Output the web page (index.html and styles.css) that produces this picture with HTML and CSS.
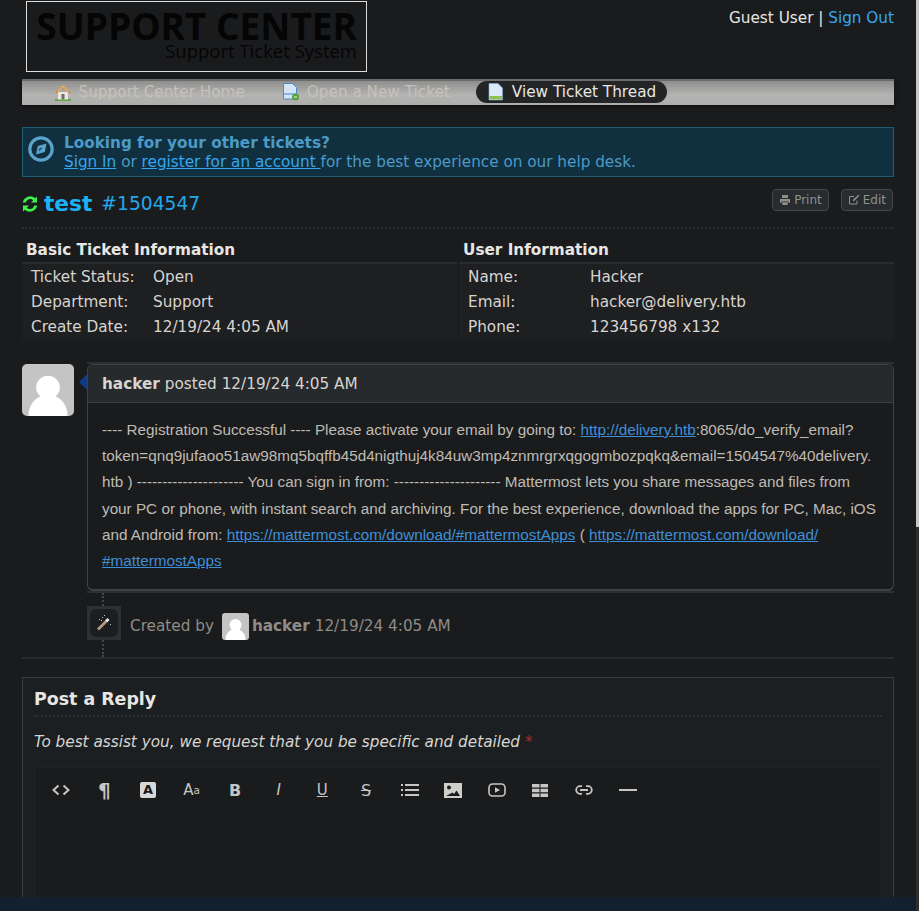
FILE: index.html
```html
<!DOCTYPE html>
<html lang="en">
<head>
    <meta charset="UTF-8">
    <meta name="viewport" content="width=device-width, initial-scale=1.0">
    <title>Support Center</title>
    <link rel="stylesheet" href="styles.css">
</head>
<body>
    <div class="window">
        <div class="page">
            <div class="container">
                <div class="header">
                    <div class="logo">
                        <div class="logo-title">SUPPORT CENTER</div>
                        <div class="logo-sub">Support Ticket System</div>
                    </div>
                    <p class="user-links">Guest User | <a href="#">Sign Out</a></p>
                </div>

                <ul class="nav">
                    <li>
                        <svg class="nav-icon" viewBox="0 0 18 18"><path d="M1 16h16v2H1z" fill="#5fa83c"/><path d="M4 9h10v7.500H4z" fill="#ece6da"/><path d="M7.500 11h3v5.500h-3z" fill="#6f6f6f"/><path d="M9 2 1 9.500l1.500 1L9 5l6.500 5.500 1.500-1z" fill="#c98a4b"/><path d="M9 2 3 8l1 1 5-4.500L14 9l1-1z" fill="#e2ad72"/></svg>
                        <a href="#">Support Center Home</a>
                    </li>
                    <li>
                        <svg class="nav-icon" viewBox="0 0 18 18"><path d="M1.500.500h9l4 4V16h-13z" fill="#d5e5f8" stroke="#4d88cf"/><path d="M2 10h12v2H2z" fill="#8db6e6"/><circle cx="13.500" cy="14" r="3.500" fill="#5aa43a"/><path d="M12 13.500h3v1h-3z" fill="#e8f5df"/></svg>
                        <a href="#">Open a New Ticket</a>
                    </li>
                    <li class="active">
                        <svg class="nav-icon" viewBox="0 0 18 18"><path d="M2 .500h9l4.500 4.500v12H2z" fill="#dbe9f9" stroke="#7daee0" stroke-width=".6"/><path d="M2.500 13h12.500v3.500H2.500z" fill="#8cc152"/></svg>
                        <a href="#">View Ticket Thread</a>
                    </li>
                </ul>

                <div class="notice">
                    <svg class="notice-icon" viewBox="0 0 26 26"><circle cx="13" cy="13" r="11.200" fill="none" stroke="#5ba3cb" stroke-width="3.200"/><path d="M18.500 7.500 16.800 16 8 18.500 9.700 10z" fill="#5ba3cb"/><path d="M14.500 11.500 11.500 12.500 10.900 15.600z" fill="#10303f"/></svg>
                    <div>
                        <strong>Looking for your other tickets?</strong><br>
                        <a href="#">Sign In</a> or <a href="#">register for an account </a>for the best experience on our help desk.
                    </div>
                </div>

                <div class="ticket-head">
                    <h1>
                        <svg class="refresh" viewBox="0 0 16 16"><path d="M15 .500v6H9l2.200-2.200A4.600 4.600 0 0 0 3.700 6.500H.800A7.500 7.500 0 0 1 13.200 2.300z" fill="#3cf04c"/><path d="M1 15.500v-6h6L4.800 11.700a4.600 4.600 0 0 0 7.500-2.200h2.900A7.500 7.500 0 0 1 2.800 13.700z" fill="#3cf04c"/></svg>
                        <a href="#" class="subject">test</a>
                        <span class="number">#1504547</span>
                    </h1>
                    <div class="actions">
                        <a href="#" class="btn">
                            <svg viewBox="0 0 12 12"><path d="M3 1h6v3H3zM1 5h10v4H9.500V7.500h-7V9H1zM3.300 8.200h5.400V11H3.300z" fill="currentColor"/></svg>
                            Print
                        </a>
                        <a href="#" class="btn">
                            <svg viewBox="0 0 12 12"><path d="M9 6.500V10H1.500V2.500H6" fill="none" stroke="currentColor"/><path d="M10.300.800l1 1L6.200 7H5V5.800z" fill="currentColor"/></svg>
                            Edit
                        </a>
                    </div>
                </div>

                <div class="info">
                    <div class="info-col">
                        <h3>Basic Ticket Information</h3>
                        <table>
                            <tr><th>Ticket Status:</th><td>Open</td></tr>
                            <tr><th>Department:</th><td>Support</td></tr>
                            <tr><th>Create Date:</th><td>12/19/24 4:05 AM</td></tr>
                        </table>
                    </div>
                    <div class="info-col">
                        <h3>User Information</h3>
                        <table>
                            <tr><th>Name:</th><td>Hacker</td></tr>
                            <tr><th>Email:</th><td>hacker@delivery.htb</td></tr>
                            <tr><th>Phone:</th><td>123456798 x132</td></tr>
                        </table>
                    </div>
                </div>

                <div class="thread-entry">
                    <svg class="avatar" viewBox="0 0 52 52"><rect width="52" height="52" fill="#c4c4c4"/><circle cx="26" cy="23.500" r="11.800" fill="#fff"/><path d="M6.500 52C6.500 39 15 31 26 31s19.500 8 19.500 21z" fill="#fff"/></svg>
                    <div class="card">
                        <div class="card-inner">
                            <div class="card-head"><b>hacker</b> posted 12/19/24 4:05 AM</div>
                            <div class="card-body">
                                ---- Registration Successful ---- Please activate your email by going to: <a href="#">http://delivery.htb</a>:8065/do_verify_email?<br>
                                token=qnq9jufaoo51aw98mq5bqffb45d4nigthuj4k84uw3mp4znmrgrxqgogmbozpqkq&amp;email=1504547%40delivery.<br>
                                htb ) --------------------- You can sign in from: --------------------- Mattermost lets you share messages and files from<br>
                                your PC or phone, with instant search and archiving. For the best experience, download the apps for PC, Mac, iOS<br>
                                and Android from: <a href="#">https://mattermost.com/download/#mattermostApps</a> ( <a href="#">https://mattermost.com/download/<br>#mattermostApps</a>
                            </div>
                        </div>
                    </div>
                </div>

                <div class="event">
                    <div class="event-icon">
                        <span>
                            <svg viewBox="0 0 18 18"><path d="M2 14.500 11.500 5l2 2L4 16.500z" fill="#b09a85"/><path d="M10.200 6.300 12.500 4l2 2-2.300 2.300z" fill="#e8e8e8"/><path d="M7 3h1v1H7zM4 5h1v1H4zM9 1h1v1H9zM6 6h1v1H6zM15 10h1v1h-1z" fill="#c8c8c8"/></svg>
                        </span>
                    </div>
                    <div class="event-text">
                        <span>Created by</span>
                        <svg class="mini-avatar" viewBox="0 0 27 27"><rect width="27" height="27" fill="#c4c4c4"/><circle cx="13.500" cy="12" r="6" fill="#fff"/><path d="M3.500 27c0-7 4.500-11 10-11s10 4 10 11z" fill="#fff"/></svg>
                        <b>hacker</b>
                        <span class="event-date">12/19/24 4:05 AM</span>
                    </div>
                </div>
                <div class="divider"></div>

                <div class="reply">
                    <h2>Post a Reply</h2>
                    <p class="hint">To best assist you, we request that you be specific and detailed <span class="req">*</span></p>
                    <div class="editor">
                        <div class="toolbar">
                            <span class="tool"><svg viewBox="0 0 18 12"><path d="M6.500 1.500 1.500 6l5 4.500M11.500 1.500l5 4.500-5 4.500" fill="none" stroke="currentColor" stroke-width="2"/></svg></span>
                            <span class="tool para">¶</span>
                            <span class="tool"><span class="boxed">A</span></span>
                            <span class="tool">A<small>a</small></span>
                            <span class="tool"><b>B</b></span>
                            <span class="tool"><i>I</i></span>
                            <span class="tool"><u>U</u></span>
                            <span class="tool strike"><s>S</s></span>
                            <span class="tool"><svg viewBox="0 0 18 14"><path d="M0 1h2v2H0zM4 1h14v2H4zM0 6h2v2H0zM4 6h14v2H4zM0 11h2v2H0zM4 11h14v2H4z" fill="currentColor"/></svg></span>
                            <span class="tool"><svg viewBox="0 0 18 15"><path fill-rule="evenodd" d="M0 0h18v15H0zM5 2.500a2 2 0 1 0 0 4 2 2 0 0 0 0-4zM2 13h14l-3.500-5.500-2.500 3.500-1.500-1.500z" fill="#d0cec9"/></svg></span>
                            <span class="tool"><svg viewBox="0 0 18 14"><rect x="1" y="1" width="16" height="12" rx="3.500" fill="none" stroke="currentColor" stroke-width="1.600"/><path d="M7 4.200v5.600L12 7z" fill="currentColor"/></svg></span>
                            <span class="tool"><svg class="table-icon" viewBox="0 0 16 13"><path d="M0 0h7.500v3.500H0zM8.500 0H16v3.500H8.500zM0 4.700h7.500v3.600H0zM8.500 4.700H16v3.600H8.500zM0 9.500h7.500V13H0zM8.500 9.500H16V13H8.500z" fill="currentColor"/></svg></span>
                            <span class="tool"><svg viewBox="0 0 18 10"><path d="M7 1.200H5a3.800 3.800 0 0 0 0 7.600h2M11 1.200h2a3.800 3.800 0 0 1 0 7.600h-2M5 5h8" fill="none" stroke="currentColor" stroke-width="1.800"/></svg></span>
                            <span class="tool"><svg viewBox="0 0 18 2"><path d="M0 0h18v2H0z" fill="currentColor"/></svg></span>
                        </div>
                    </div>
                </div>
            </div>
            <div class="footer"></div>
        </div>
        <div class="scrollbar"></div>
    </div>
</body>
</html>
```

FILE: styles.css
```css
* {
    box-sizing: border-box;
}
html, body {
    margin: 0;
    height: 100%;
    overflow: hidden;
}
body {
    font-family: "DejaVu Sans", Verdana, sans-serif;
    font-size: 15.250px;
    color: #d8d4cf;
    background-color: #1a1b1d;
}
a {
    color: #36a6f0;
}
.window {
    display: flex;
    height: 911px;
}
.page {
    flex: 1;
    display: flex;
    flex-direction: column;
    overflow: hidden;
}
.scrollbar {
    width: 3px;
    background: linear-gradient(#c8c8c8 0, #c8c8c8 527px, #2b2d2f 527px);
}
.container {
    flex: 1;
    padding: 0 22px;
    overflow: hidden;
}
.footer {
    height: 14px;
    background-color: #12202f;
}

/* header */
.header {
    display: flex;
    justify-content: space-between;
    height: 79px;
}
.logo {
    width: 341px;
    height: 71px;
    margin: 1px 0 0 4px;
    padding: 4px 9px 0 0;
    border: 1px solid #ddd;
    text-align: right;
    font-family: "Open Sans", sans-serif;
    color: #050505;
}
.logo-title {
    font-size: 37px;
    font-weight: 700;
    line-height: 40px;
}
.logo-sub {
    font-size: 18.500px;
    line-height: 20px;
    margin-top: -5px;
}
.user-links {
    margin: 9px 0 0;
    line-height: 18px;
    color: #e8e6e3;
}
.user-links a {
    text-decoration: none;
}

/* nav */
.nav {
    display: flex;
    gap: 15.500px;
    list-style: none;
    height: 26px;
    margin: 0;
    padding: 0 0 0 21px;
    border-top: 2px solid #6b6b6b;
    background: linear-gradient(#8f8f8f, #b4b4b2 60%, #adadad);
    box-shadow: 0 2px 4px rgba(0,0,0,0.5);
}
.nav li {
    display: flex;
    align-items: center;
    gap: 6.500px;
    height: 22px;
    padding: 0 11px;
    border-radius: 11px;
}
.nav a {
    color: #c6c1ba;
    text-decoration: none;
}
.nav-icon {
    width: 18px;
    height: 18px;
}
.nav .active {
    background-color: #222426;
}
.nav .active a {
    color: #e8e6e3;
}

/* notice */
.notice {
    display: flex;
    align-items: center;
    gap: 10px;
    height: 50px;
    margin-top: 22px;
    padding: 2px 0 0 5px;
    border: 1px solid #1a5f73;
    background-color: #10303f;
    color: #4c9ac7;
    line-height: 19px;
}
.notice-icon {
    align-self: flex-start;
    width: 26px;
    height: 26px;
    margin-top: 6px;
    flex-shrink: 0;
}

/* ticket heading */
.ticket-head {
    display: flex;
    justify-content: space-between;
    height: 52px;
    border-bottom: 2px dotted #2b2d2f;
}
h1 {
    align-self: flex-start;
    margin: 13px 0 0;
    font-weight: 400;
    line-height: 28px;
    display: flex;
    align-items: center;
}
.refresh {
    width: 16px;
    height: 16px;
    margin-right: 6px;
}
.subject {
    font-size: 21.700px;
    font-weight: 700;
    color: #1cb2f5;
    text-decoration: none;
}
.number {
    margin-left: 9px;
    color: #22a8ea;
    font-size: 18.700px;
}
.actions {
    display: flex;
    gap: 12px;
    margin: 12px 1px 0 0;
}
.btn {
    display: flex;
    align-items: center;
    gap: 3px;
    height: 22px;
    padding: 0 6px;
    border: 1px solid #46494c;
    border-radius: 4px;
    background-color: #292c2e;
    color: #90908c;
    font-size: 12px;
    text-decoration: none;
}
.btn svg {
    width: 12px;
    height: 12px;
}

/* info tables */
.info {
    display: flex;
    gap: 2px;
    margin-top: 11px;
}
.info-col {
    flex: 1;
}
.info-col h3 {
    margin: 0;
    padding: 0 4px;
    height: 24px;
    font-size: 15.250px;
    font-weight: 700;
    line-height: 21px;
    color: #e8e6e3;
    border-bottom: 2px solid #2a2b2c;
}
.info-col table {
    width: 100%;
    border-collapse: collapse;
    background-color: #1d1f21;
}
.info-col th, .info-col td {
    height: 25.330px;
    padding: 0;
    font-weight: 400;
    text-align: left;
    color: #d8d4cf;
}
.info-col th {
    width: 131px;
    padding-left: 9px;
}

/* thread */
.thread-entry {
    display: flex;
    margin-top: 22px;
}
.avatar {
    width: 52px;
    height: 52px;
    margin-top: 2px;
    border-radius: 5px;
    flex-shrink: 0;
}
.card {
    flex: 1;
    margin-left: 13px;
    border-top: 2px solid #2e3032;
    border-bottom: 2px solid #2e3032;
}
.card-inner {
    position: relative;
    border: 1px solid #3f4245;
    border-bottom-width: 2px;
    border-radius: 6px;
}
.card-inner::before {
    content: "";
    position: absolute;
    left: -9px;
    top: 9px;
    border-style: solid;
    border-width: 8px 8px 8px 0;
    border-color: transparent #0f3b86 transparent transparent;
}
.card-head {
    height: 38px;
    padding: 2px 14px 0;
    display: flex;
    align-items: center;
    gap: 5px;
    background-color: #272a2d;
    border-bottom: 1px solid #3a3d40;
    border-radius: 6px 6px 0 0;
}
.card-body {
    padding: 14px 14px 15px;
    font-family: "Liberation Sans", Arial, sans-serif;
    font-size: 15.280px;
    line-height: 26.250px;
    color: #bfbbb4;
}
.card-body a {
    color: #3f8fd6;
}

/* event row */
.event {
    position: relative;
    display: flex;
    align-items: center;
    height: 64px;
    margin-left: 65px;
    color: #8f8c86;
}
.event::before {
    content: "";
    position: absolute;
    left: 15px;
    top: 0;
    bottom: 0;
    border-left: 2px dotted #44474a;
}
.event-icon {
    position: relative;
    width: 34px;
    height: 34px;
    margin-bottom: 4px;
    padding: 3px;
    background-color: #2e3032;
}
.event-icon span {
    display: flex;
    align-items: center;
    justify-content: center;
    width: 28px;
    height: 28px;
    border-radius: 6px;
    background-color: #1b1d1f;
}
.event-icon svg {
    width: 18px;
    height: 18px;
}
.event-text {
    display: flex;
    align-items: center;
    margin: 2px 0 0 9px;
}
.mini-avatar {
    width: 27px;
    height: 27px;
    margin: 0 3px 0 8px;
    border-radius: 3px;
}
.event-date {
    margin-left: 5px;
}
.divider {
    height: 2px;
    background-color: #2a2b2c;
}

/* reply */
.reply {
    height: 300px;
    margin-top: 18px;
    padding: 0 11px;
    border: 1px solid #3a3d40;
    background-color: #1b1f21;
}
.reply h2 {
    height: 30px;
    margin: 9px 0 0;
    font-size: 17.400px;
    font-weight: 700;
    line-height: 24px;
    color: #e8e6e3;
    border-bottom: 2px dotted #2b2d2f;
}
.hint {
    margin: 15px 0 0;
    font-style: italic;
    line-height: 20px;
}
.req {
    color: #a82a2a;
}
.editor {
    height: 180px;
    margin-top: 15px;
    border: 1px solid #202224;
    background-color: #1a1b1d;
}
.toolbar {
    display: flex;
    padding: 11px 0 0 4px;
    color: #c8c6c2;
}
.tool {
    flex: 0 0 43.600px;
    height: 22px;
    display: flex;
    align-items: center;
    justify-content: center;
    font-size: 15px;
}
.tool svg {
    width: 18px;
}
.tool .table-icon {
    width: 16px;
}
.tool b {
    font-size: 16px;
}
.tool small {
    font-size: 10.500px;
}
.para {
    font-size: 20px;
    font-weight: 700;
}
.strike {
    font-size: 16px;
}
.boxed {
    width: 16px;
    height: 16px;
    border-radius: 2px;
    background-color: #d8d8d8;
    color: #1a1b1d;
    font-weight: 700;
    font-size: 13px;
    line-height: 16px;
    text-align: center;
}
```
